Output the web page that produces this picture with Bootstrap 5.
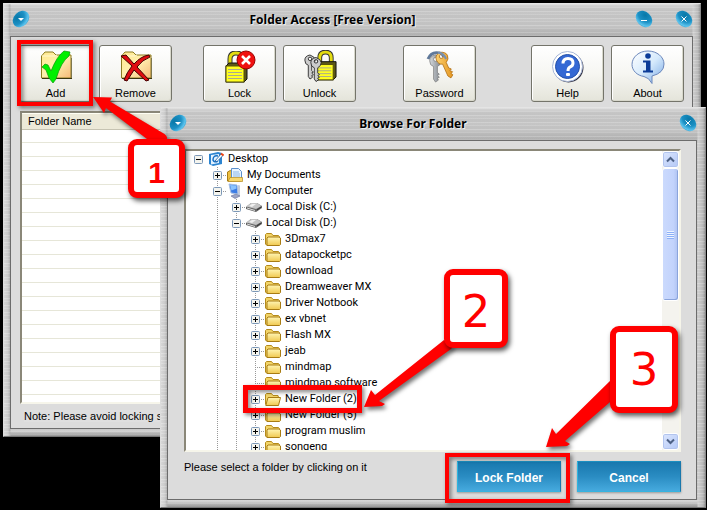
<!DOCTYPE html>
<html lang="en">
<head>
<meta charset="utf-8">
<meta name="viewport" content="width=device-width, initial-scale=1">
<title>Folder Access</title>
<link href="https://cdn.jsdelivr.net/npm/bootstrap@5.3.0/dist/css/bootstrap.min.css" rel="stylesheet">
<style>
  html, body { height: 100%; }
  body { background: #000; color: #000; font: 12px/16px "Liberation Sans", Arial, sans-serif; overflow: hidden; }

  /* brushed metal windows */
  .win {
    position: absolute; padding: 0 7px 7px 6px;
    border: 1px solid; border-color: #e4e4e4 #8a8a8a #777 #dcdcdc;
    background:
      repeating-linear-gradient(180deg, rgba(255,255,255,.14) 0 1px, rgba(0,0,0,.02) 1px 3px, rgba(255,255,255,.07) 3px 4px, rgba(0,0,0,.03) 4px 7px),
      linear-gradient(90deg, #dedede 0, #d0d0d0 4px, #b4b4b4 6px, rgba(0,0,0,0) 7px, rgba(0,0,0,0) calc(100% - 8px), #d4d4d4 calc(100% - 7px), #bdbdbd calc(100% - 2px), #9a9a9a),
      linear-gradient(180deg, #dadada 0, #cacaca 5px, #c8c8c8 22px, #b2b2b2 32px, #c4c4c4 34px, #c4c4c4 calc(100% - 7px), #dadada calc(100% - 6px), #9c9c9c);
  }
  .win-main { inset: 3px 6px 73px 3px; }
  .win-browse { inset: 107px 1px 2px 160px; padding-right: 8px; }
  .titlebar { height: 32px; flex: none; padding: 0 0 3px 2px; }
  .win-title { font: bold 12px/16px "Noto Sans", Tahoma, sans-serif; padding-top: 2px; text-shadow: 1px 1px 0 #eee; }
  .orb { width: 18px; height: 18px; padding: 0; border: 0; background: none; line-height: 0; }
  .orb + .orb { margin-left: 22px; }
  .spare { width: 40px; }
  .pane { background: #dcdcdc; border: 1px solid #6c6c6c; min-height: 0; }

  /* toolbar */
  .tools { padding: 8px 8px 0; }
  .tool {
    width: 73px; height: 57px; padding: 3px 0 0; border: 1px solid #74746a; border-radius: 3px;
    background: linear-gradient(#fff, #f6f6f2 50%, #e4e4da); color: #000;
    box-shadow: inset 1px 1px 0 #fff, inset -1px -1px 0 #d8d8cc;
    font: 11px/14px "Liberation Sans", Arial, sans-serif;
  }
  .tool svg { display: block; margin: 0 auto 2px; }
  .gap-s { margin-left: 7px; } .gap-m { margin-left: 31px; } .gap-l { margin-left: 47px; }

  .sunken { border: 2px solid; border-color: #8a8778 #f6f5ea #f6f5ea #8a8778; background: #fff; min-height: 0; }
  .lockers { margin: 9px 9px 0; background: repeating-linear-gradient(#fff 0 13px, #e6e6d8 13px 14px) 0 16px; }
  .lockers th { height: 16px; padding: 0 0 0 6px; font: 11px/15px "Liberation Sans", Arial, sans-serif; background: #ece9d8; border-bottom: 1px solid #c6c3b2; border-top: 1px solid #fffff4; }
  .note { padding: 4px 0 4px 13px; font-size: 11px; }
  .note span { background: #dfdfdf; }

  /* folder tree */
  .browse-pane { padding: 8px 15px 7px 16px; }
  .tree { font: 11px/16px Roboto, Tahoma, sans-serif; padding-left: 3px; overflow: hidden; flex: 1 1 0; }
  .tree ul { list-style: none; margin: 0; padding: 0; }
  .tree ul ul { margin-left: 19px; background: repeating-linear-gradient(#999 0 1px, #fff 1px 2px) 9px 0 / 1px 100% no-repeat; }
  .node { height: 16px; display: flex; align-items: center; white-space: nowrap; position: relative; }
  .node > svg { width: 16px; height: 16px; flex: none; margin-right: 4px; }
  .twist { width: 19px; height: 16px; padding: 0; border: 0; flex: none; line-height: 0; background: repeating-linear-gradient(90deg, #999 0 1px, transparent 1px 2px) 9px 8px / 10px 1px no-repeat; }
  .root > .twist { background: none; }

  .scroll { width: 17px; background: #f4f3ee; }
  .sb { height: 17px; border: 1px solid #fff; border-radius: 3px; padding: 0; background: linear-gradient(135deg, #dbe6fe, #b4c8f6); box-shadow: inset 0 0 0 1px #b2c4ee; line-height: 0; }
  .thumb { height: 133px; border: 1px solid #fff; border-radius: 3px; background: linear-gradient(90deg, #cbdafd, #c2d3fc 70%, #aec2f0); box-shadow: inset -1px -1px 0 #8aa4dc; }
  .grip { width: 7px; height: 8px; background: repeating-linear-gradient(#eef4fe 0 1px, #8cb0f8 1px 2px); }

  .prompt { font-size: 11px; padding-top: 7px; }
  .act { display: block; width: 104px; height: 31px; padding: 2px 0 0; border-radius: 0; border: 1px solid; border-color: #1b8fc0 #1a78ac #35b4e0 #2fb4de; color: #fff; background: linear-gradient(#1878ae, #2a8cc2 50%, #46aade); box-shadow: 0 1px 2px #999; font: bold 12px/16px "Liberation Sans", Arial, sans-serif; }
  .acts { gap: 16px; padding-top: 9px; }

  /* tutorial marks */
  .ring { position: absolute; border: 4px solid #f00; filter: drop-shadow(2px 2px 2px rgba(0,0,0,.5)); pointer-events: none; z-index: 2; }
  .ring-add { inset: -5px -1px -4px -2px; }
  .ring-node { left: -3px; width: 119px; top: -6px; bottom: -6px; border-width: 5px; }
  .ring-lock { inset: -8px -9px -11px -12px; }
  .step { position: absolute; z-index: 4; display: flex; align-items: center; justify-content: center; border: 6px solid #f00; border-radius: 9px; background: #fff; color: #f00; box-shadow: 2px 3px 5px rgba(0,0,0,.65); font: 45px/45px "DejaVu Sans", Verdana, sans-serif; }
  .arrow { position: absolute; z-index: 3; fill: #f00; filter: drop-shadow(2px 3px 2px rgba(0,0,0,.55)); pointer-events: none; }
  .step1 { left: 128px; top: 139px; width: 57px; height: 59px; padding-top: 9px; font: bold 30px/30px "Liberation Sans", Arial, sans-serif; }
  .step2 { left: 444px; top: 269px; width: 64px; height: 79px; padding-top: 6px; }
  .step3 { right: 29px; top: 326px; width: 68px; height: 87px; }
  .arrow1 { left: 90px; top: 94px; } .arrow2 { left: 360px; top: 335px; } .arrow3 { right: 87px; top: 376px; }
</style>
<script src="https://cdn.jsdelivr.net/npm/bootstrap@5.3.0/dist/js/bootstrap.bundle.min.js"></script>
</head>
<body>
<svg width="0" height="0" class="position-absolute" aria-hidden="true">
  <defs>
    <radialGradient id="orbFill" cx=".4" cy=".25" r=".85"><stop offset="0" stop-color="#0878a8"/><stop offset=".5" stop-color="#1c90c4"/><stop offset=".8" stop-color="#5cc4ee"/><stop offset="1" stop-color="#1e8cba"/></radialGradient>
    <linearGradient id="paper" x2="1" y2="1"><stop offset="0" stop-color="#ffe98e"/><stop offset=".5" stop-color="#fff0b0"/><stop offset="1" stop-color="#f6b878"/></linearGradient>
    <linearGradient id="fold" x2="0" y2="1"><stop offset="0" stop-color="#fff6b4"/><stop offset="1" stop-color="#f0c850"/></linearGradient>
    <linearGradient id="bubble" x2="1" y2="1"><stop offset="0" stop-color="#fff"/><stop offset=".5" stop-color="#d6eafc"/><stop offset="1" stop-color="#78a8e4"/></linearGradient>
    <linearGradient id="gold" x2="1" y2="1"><stop offset="0" stop-color="#ffd878"/><stop offset="1" stop-color="#e08a10"/></linearGradient>
    <linearGradient id="steel" x2="1"><stop offset="0" stop-color="#d4d8dc"/><stop offset="1" stop-color="#7c8288"/></linearGradient>
    <symbol id="orbL" viewBox="0 0 18 18"><ellipse cx="9" cy="9" rx="9.2" ry="7.2" transform="rotate(-45 9 9)" fill="url(#orbFill)"/></symbol>
    <symbol id="orbR" viewBox="0 0 18 18"><ellipse cx="9" cy="9" rx="9.2" ry="7.2" transform="rotate(45 9 9)" fill="url(#orbFill)"/></symbol>
    <symbol id="bigfolder" viewBox="0 0 32 32"><path d="M1.500 28V6L5 2h8l3 3h15v23z" fill="url(#paper)" stroke="#8c7c20"/><path d="M2 6h13l2-1" fill="none" stroke="#fff8d0"/><path d="M2 28.500h30V8" fill="none" stroke="#3a3410"/></symbol>
    <symbol id="padlock" viewBox="0 0 24 32"><path d="M6 15V8q0-6 6-6t6 6v7" fill="none" stroke="#333" stroke-width="5"/><path d="M6 15V8q0-6 6-6t6 6v7" fill="none" stroke="#e4dc10" stroke-width="3"/><path d="M2 15l3-3h18v16l-3 3H2z" fill="#5c5818" stroke="#111"/><rect x="2" y="15" width="18" height="16" fill="#ffff20" stroke="#55500a"/><path d="M4 18.500h14M4 21.500h14M4 24.500h14M4 27.500h14" stroke="#a8a890"/></symbol>
    <symbol id="plus" viewBox="0 0 19 16"><rect x="5.500" y="4.500" width="8" height="8" rx="1" fill="#f4f4ee" stroke="#7c98b8"/><path d="M7 8.500h5M9.500 6v5" stroke="#000"/></symbol>
    <symbol id="minus" viewBox="0 0 19 16"><rect x="5.500" y="4.500" width="8" height="8" rx="1" fill="#f4f4ee" stroke="#7c98b8"/><path d="M7 8.500h5" stroke="#000"/></symbol>
    <symbol id="dir" viewBox="0 0 16 16"><path d="M.5 13V3.500l1-1h5l1.500 2h5.500l1 1V13l-1 1h-12z" fill="#f2d468" stroke="#b48a1c"/><path d="M2 14.500V7l1-1h11l1.500 1v6.500l-1 1z" fill="url(#fold)" stroke="#a87c14"/></symbol>
    <symbol id="dirOpen" viewBox="0 0 16 16"><path d="M.5 13.500V3.500l1-1h5l1.500 2h5l.5 2" fill="#f2d468" stroke="#b48a1c"/><path d="M.8 14.500L3 6.500h12.500l-2 8z" fill="url(#fold)" stroke="#a87c14"/></symbol>
    <symbol id="disk" viewBox="0 0 16 16"><path d="M0 8l5-4h6l5 3v2l-6 4-10-3z" fill="#666"/><path d="M0 7.500L5 4h6l4.500 3L10 10z" fill="#c4c4c4"/><path d="M3 7l3-2h4l-4 3z" fill="#f0f0f0"/><path d="M11 11l4-3" stroke="#333"/><path d="M1 9l8 2.500" stroke="#ddd"/></symbol>
    <symbol id="desk" viewBox="0 0 16 16"><path d="M1 3l9-2 4 1v11l-9 2-4-2z" fill="#2c84d0"/><path d="M3 4l8-1v9l-8 1.500z" fill="#e4f2fe"/><path d="M10 5q-5-1-5 4 1 3 5 1" fill="none" stroke="#1670c4" stroke-width="1.500"/><path d="M7 10l6-7 2 1.500-6 6z" fill="#fff" stroke="#1c5c9c" stroke-width=".8"/><path d="M13 2.500l2.500 2" stroke="#f04818" stroke-width="2"/></symbol>
    <symbol id="docs" viewBox="0 0 16 16"><path d="M.5 14V5q3-3 5 0h8v9z" fill="#eebf40" stroke="#a87c14"/><path d="M4.500 12.500V1.500h7l3 3v8z" fill="#e8f4ff" stroke="#5c90cc"/><path d="M6 5h6M6 7h7M6 9h7" stroke="#8cb8e8"/><path d="M1 14.500l2-4h12.500v4z" fill="#f8d870" stroke="#b48a1c" stroke-width=".7"/></symbol>
    <symbol id="pc" viewBox="0 0 16 16"><path d="M2 1l8 1 1 9-7-1z" fill="#3c7ce4" stroke="#a8c0e4"/><path d="M3 2l6 .5.500 3-5 2z" fill="#8cc4ff"/><path d="M11 2l2 .5V13l-2 1z" fill="#c4ccdc"/><path d="M4 13l5-2 4 2-5 2.500z" fill="#9ca4c4" stroke="#687098" stroke-width=".6"/></symbol>
    <symbol id="key" viewBox="0 0 14 30"><path fill-rule="evenodd" d="M7 1Q1 2 1 7t4 6v13l2 3 3-2-1-2 2-1-2-2 2-1-2-2v-6q4-2 4-6T7 1zM7 3.500a2 2 0 1 1 0 4 2 2 0 0 1 0-4z"/></symbol>
  </defs>
</svg>

<main class="win win-main d-flex flex-column">
  <header class="titlebar d-flex align-items-center">
    <button class="orb" type="button" aria-label="Window menu"><svg width="18" height="18"><use href="#orbL"/><path d="M6 8h6l-3 3z" fill="#fff"/></svg></button>
    <h1 class="win-title flex-grow-1 text-center m-0">Folder Access [Free Version]</h1>
    <button class="orb" type="button" aria-label="Minimize"><svg width="18" height="18"><use href="#orbR"/><path d="M6 10.500h6" stroke="#fff"/></svg></button>
    <button class="orb" type="button" aria-label="Close"><svg width="18" height="18"><use href="#orbR"/><path d="M6.500 6.500l5 5m0-5l-5 5" stroke="#fff"/></svg></button>
  </header>
  <div class="pane flex-grow-1 d-flex flex-column">
    <div class="tools d-flex">
      <div class="position-relative">
        <button class="tool" type="button"><svg width="34" height="34" viewBox="0 0 34 34"><use href="#bigfolder" x="1" y="0" width="32" height="32"/><path d="M3 17l3-3 3 1 3 6q6-15 13-20l6 1-1 4q-8 6-13 23l-3 4-4-5-3-8z" fill="#00f000" stroke="#089808" stroke-width=".7"/></svg>Add</button>
        <span class="ring ring-add"></span>
      </div>
      <button class="tool gap-s" type="button"><svg width="34" height="34" viewBox="0 0 34 34"><use href="#bigfolder" x="1" y="0" width="32" height="32"/><path d="M2 6l5-1 8 9q7-8 15-9l1 2q-8 3-13 10l12 13-3 1-12-11-7 11-3-1q3-8 8-14z" fill="#e00c10" stroke="#400"/></svg>Remove</button>
      <button class="tool gap-m" type="button"><svg width="34" height="34" viewBox="0 0 34 34"><use href="#padlock" x="1" y="1" width="24" height="32"/><circle cx="23" cy="10" r="9" fill="#f01010" stroke="#900"/><path d="M19 6l8 8m0-8l-8 8" stroke="#fff" stroke-width="2.500"/></svg>Lock</button>
      <button class="tool gap-s" type="button"><svg width="34" height="34" viewBox="0 0 34 34"><use href="#padlock" x="11" y="0" width="23" height="31"/><g fill="#ccc" stroke="#222"><use href="#key" x="1" y="3" width="12" height="28"/><use href="#key" x="7" y="6" width="12" height="27"/></g></svg>Unlock</button>
      <button class="tool gap-l" type="button"><svg width="34" height="34" viewBox="0 0 34 34"><path d="M5 9q4-9 14-5l4 6" fill="none" stroke="#60799a" stroke-width="3"/><g fill="url(#steel)" stroke="#777" stroke-width=".7"><use href="#key" x="4" y="4" width="17" height="29"/></g><g fill="url(#gold)" stroke="#b06c10" stroke-width=".7" transform="rotate(-24 20 15)"><use href="#key" x="13" y="1" width="18" height="30"/></g><path d="M15 3q5-1 8 6" fill="none" stroke="#7890b0" stroke-width="2"/></svg>Password</button>
      <span class="flex-grow-1"></span>
      <button class="tool" type="button"><svg width="34" height="34" viewBox="0 0 34 34"><circle cx="17.500" cy="17.500" r="15" fill="#334"/><circle cx="16.500" cy="16.500" r="15" fill="#fff" stroke="#a8b8d8"/><circle cx="16.500" cy="16.500" r="12" fill="#3468d4" stroke="#2450a8"/><path d="M12 13.500q0-5 5-5t5 4.500q0 3-3 4-2 1-2 4" fill="none" stroke="#fff" stroke-width="3"/><rect x="15" y="23" width="4" height="3" rx="1" fill="#fff"/></svg>Help</button>
      <button class="tool gap-s" type="button"><svg width="34" height="34" viewBox="0 0 34 34"><path d="M17 1C8 1 1 7 1 14.500c0 6 5 11 12 12q5 1 8 7V26q12-3 12-12C33 7 26 1 17 1z" fill="url(#bubble)" stroke="#6c88bc"/><circle cx="17" cy="6" r="2.800" fill="#0c3c98"/><path d="M12 10.500h7.500v10h2.500v2H12v-2h3v-8h-3z" fill="#0c3c98"/></svg>About</button>
    </div>
    <div class="sunken lockers flex-grow-1">
      <table class="w-100"><thead><tr><th scope="col">Folder Name</th></tr></thead></table>
    </div>
    <div class="note"><span>Note: Please avoid locking system folders</span></div>
  </div>
</main>

<section class="win win-browse d-flex flex-column">
  <header class="titlebar d-flex align-items-center">
    <button class="orb" type="button" aria-label="Window menu"><svg width="18" height="18"><use href="#orbL"/><path d="M6 8h6l-3 3z" fill="#fff"/></svg></button>
    <h2 class="win-title flex-grow-1 text-center m-0">Browse For Folder</h2>
    <span class="spare"></span>
    <button class="orb" type="button" aria-label="Close"><svg width="18" height="18"><use href="#orbR"/><path d="M6.500 6.500l5 5m0-5l-5 5" stroke="#fff"/></svg></button>
  </header>
  <div class="pane browse-pane flex-grow-1 d-flex flex-column">
    <div class="sunken d-flex flex-grow-1 overflow-hidden">
      <div class="tree">
        <ul>
          <li><div class="node root"><button class="twist" type="button" aria-label="Collapse"><svg width="19" height="16"><use href="#minus"/></svg></button><svg><use href="#desk"/></svg>Desktop</div>
            <ul>
              <li><div class="node"><button class="twist" type="button" aria-label="Expand"><svg width="19" height="16"><use href="#plus"/></svg></button><svg><use href="#docs"/></svg>My Documents</div></li>
              <li><div class="node"><button class="twist" type="button" aria-label="Collapse"><svg width="19" height="16"><use href="#minus"/></svg></button><svg><use href="#pc"/></svg>My Computer</div>
                <ul>
                  <li><div class="node"><button class="twist" type="button" aria-label="Expand"><svg width="19" height="16"><use href="#plus"/></svg></button><svg><use href="#disk"/></svg>Local Disk (C:)</div></li>
                  <li><div class="node"><button class="twist" type="button" aria-label="Collapse"><svg width="19" height="16"><use href="#minus"/></svg></button><svg><use href="#disk"/></svg>Local Disk (D:)</div>
                    <ul>
                      <li><div class="node"><button class="twist" type="button" aria-label="Expand"><svg width="19" height="16"><use href="#plus"/></svg></button><svg><use href="#dir"/></svg>3Dmax7</div></li>
                      <li><div class="node"><button class="twist" type="button" aria-label="Expand"><svg width="19" height="16"><use href="#plus"/></svg></button><svg><use href="#dir"/></svg>datapocketpc</div></li>
                      <li><div class="node"><button class="twist" type="button" aria-label="Expand"><svg width="19" height="16"><use href="#plus"/></svg></button><svg><use href="#dir"/></svg>download</div></li>
                      <li><div class="node"><button class="twist" type="button" aria-label="Expand"><svg width="19" height="16"><use href="#plus"/></svg></button><svg><use href="#dir"/></svg>Dreamweaver MX</div></li>
                      <li><div class="node"><button class="twist" type="button" aria-label="Expand"><svg width="19" height="16"><use href="#plus"/></svg></button><svg><use href="#dir"/></svg>Driver Notbook</div></li>
                      <li><div class="node"><button class="twist" type="button" aria-label="Expand"><svg width="19" height="16"><use href="#plus"/></svg></button><svg><use href="#dir"/></svg>ex vbnet</div></li>
                      <li><div class="node"><button class="twist" type="button" aria-label="Expand"><svg width="19" height="16"><use href="#plus"/></svg></button><svg><use href="#dir"/></svg>Flash MX</div></li>
                      <li><div class="node"><button class="twist" type="button" aria-label="Expand"><svg width="19" height="16"><use href="#plus"/></svg></button><svg><use href="#dir"/></svg>jeab</div></li>
                      <li><div class="node"><span class="twist"></span><svg><use href="#dir"/></svg>mindmap</div></li>
                      <li><div class="node"><span class="twist"></span><svg><use href="#dir"/></svg>mindmap software</div></li>
                      <li><div class="node"><button class="twist" type="button" aria-label="Expand"><svg width="19" height="16"><use href="#plus"/></svg></button><svg><use href="#dirOpen"/></svg>New Folder (2)<span class="ring ring-node"></span></div></li>
                      <li><div class="node"><button class="twist" type="button" aria-label="Expand"><svg width="19" height="16"><use href="#plus"/></svg></button><svg><use href="#dir"/></svg>New Folder (5)</div></li>
                      <li><div class="node"><button class="twist" type="button" aria-label="Expand"><svg width="19" height="16"><use href="#plus"/></svg></button><svg><use href="#dir"/></svg>program muslim</div></li>
                      <li><div class="node"><button class="twist" type="button" aria-label="Expand"><svg width="19" height="16"><use href="#plus"/></svg></button><svg><use href="#dir"/></svg>songeng</div></li>
                    </ul>
                  </li>
                </ul>
              </li>
            </ul>
          </li>
        </ul>
      </div>
      <div class="scroll d-flex flex-column">
        <button class="sb" type="button" aria-label="Scroll up"><svg width="9" height="7"><path d="M1 5.500l3.500-3.500L8 5.500" fill="none" stroke="#4d6185" stroke-width="2"/></svg></button>
        <div class="thumb d-flex align-items-center justify-content-center"><span class="grip"></span></div>
        <button class="sb mt-auto" type="button" aria-label="Scroll down"><svg width="9" height="7"><path d="M1 1.500L4.500 5 8 1.500" fill="none" stroke="#4d6185" stroke-width="2"/></svg></button>
      </div>
    </div>
    <div class="d-flex justify-content-between">
      <div class="prompt">Please select a folder by clicking on it</div>
      <div class="acts d-flex">
        <div class="position-relative"><button class="act" type="button">Lock Folder</button><span class="ring ring-lock"></span></div>
        <button class="act" type="button">Cancel</button>
      </div>
    </div>
  </div>
</section>

<svg class="arrow arrow1" width="80" height="52"><path d="M3 3l19 .5-2 4 52 31q6 3 5 7l-18 1L16 14l-2 5z"/></svg>
<div class="step step1">1</div>
<svg class="arrow arrow2" width="94" height="78"><path d="M4 72l7-17 4 5L84 5l10 5-3 4-72 52 6 3-3 2z"/></svg>
<div class="step step2">2</div>
<svg class="arrow arrow3" width="78" height="76"><path d="M4 71l6-19 4 6L69 4l6 16-52 45 5 3-3 2z"/></svg>
<div class="step step3">3</div>
</body>
</html>
